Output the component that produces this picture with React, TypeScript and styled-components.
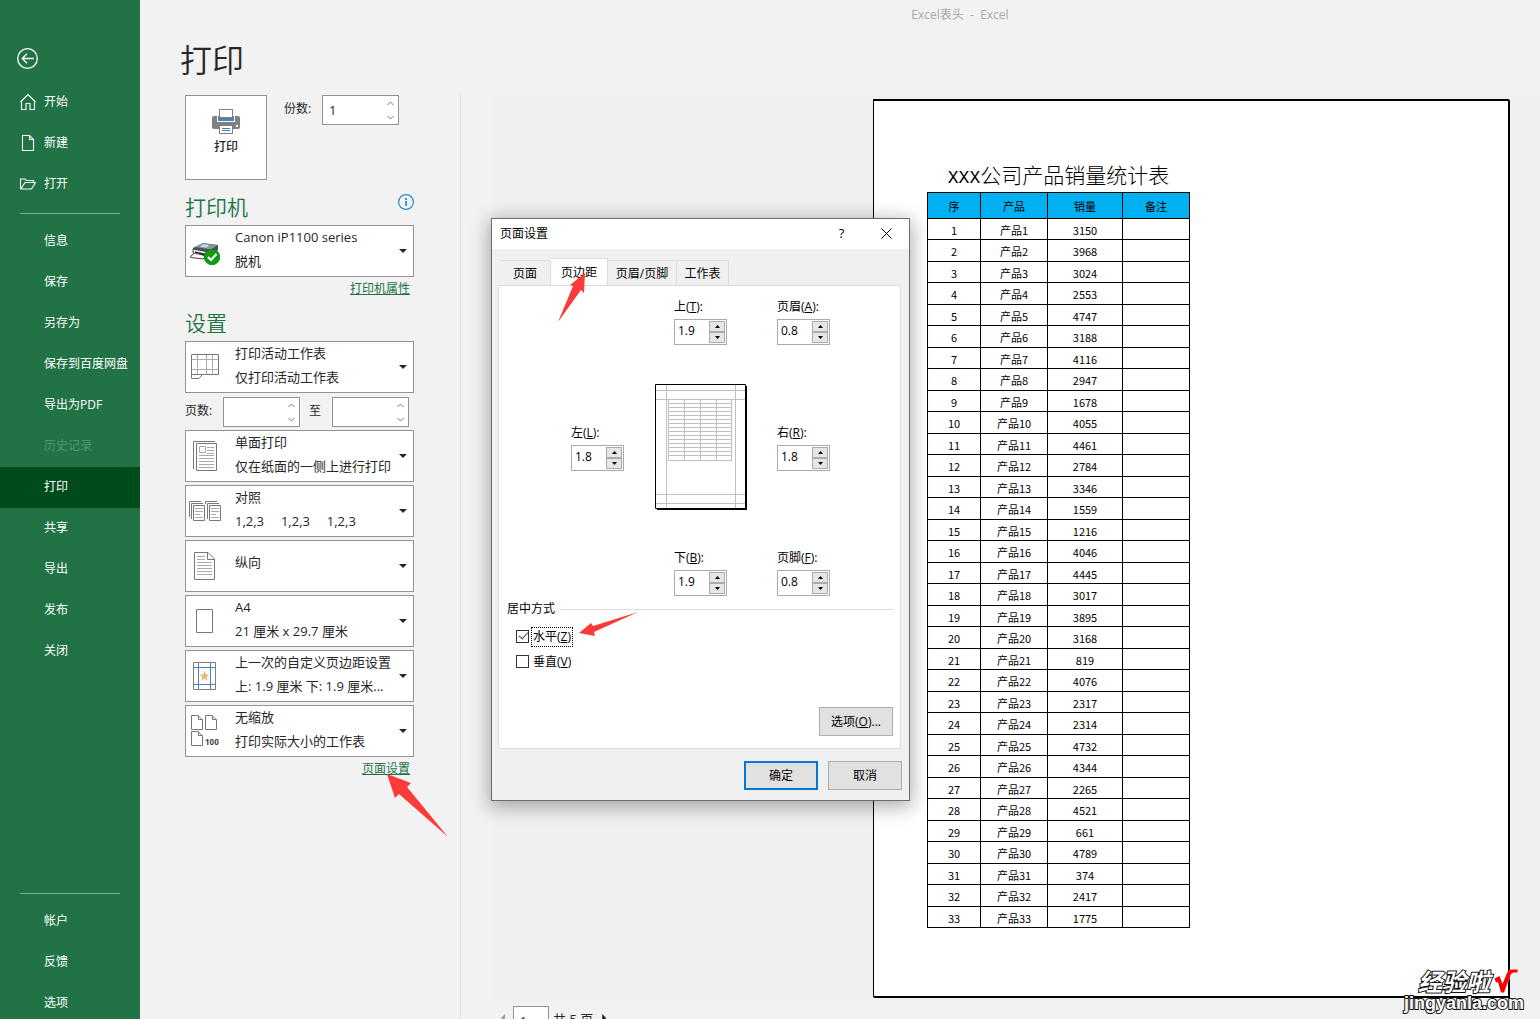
import React from "react";
import styled, { createGlobalStyle, css } from "styled-components";

const GlobalStyle = createGlobalStyle`
  *, *::before, *::after { box-sizing: border-box; }
  body {
    margin: 0;
    background: #f2f2f2;
    color: #262626;
    font-family: "Open Sans", "Noto Sans CJK SC", sans-serif;
    font-size: 12px;
    line-height: 16px;
  }
  button, input, select { font: inherit; color: inherit; margin: 0; border-radius: 0; }
  h1, h2, p, fieldset { margin: 0; padding: 0; border: 0; font-weight: 400; }
`;

/* ---------- shell ---------- */

const Shell = styled.div`
  position: relative;
  display: flex;
  height: 100vh;
  overflow: hidden;
`;

const Sidebar = styled.nav`
  flex: none;
  display: flex;
  flex-direction: column;
  width: 140px;
  padding-top: 48px;
  background: #217346;
  color: #fff;
`;

const BackButton = styled.button`
  display: block;
  width: 22px;
  height: 22px;
  margin: 0 0 11px 17px;
  padding: 0;
  border: 0;
  background: none;
`;

const NavItem = styled.a<{ $active?: boolean; $muted?: boolean; $plain?: boolean }>`
  flex: none;
  display: flex;
  align-items: center;
  gap: 8px;
  height: 41px;
  padding: 0 0 ${(p) => (p.$plain ? 2 : 0)}px 20px;
  color: ${(p) => (p.$muted ? "#569573" : "#fff")};
  background: ${(p) => (p.$active ? "#004b1c" : "transparent")};
  text-decoration: none;
`;

const NavIcon = styled.span`
  display: flex;
  width: 16px;
  height: 18px;
`;

const NavRule = styled.hr`
  flex: none;
  width: 100px;
  height: 1px;
  margin: 9px 20px 7px;
  border: 0;
  background: #6fb38c;
`;

const NavFooter = styled.div`
  display: flex;
  flex-direction: column;
  height: 135px;
  margin-top: auto;
  overflow: hidden;
`;

const Main = styled.main`
  flex: 1;
  display: flex;
  flex-direction: column;
  min-width: 0;
`;

const WindowTitle = styled.div`
  height: 30px;
  padding-left: 240px;
  color: #a8a8a8;
  line-height: 30px;
  text-align: center;
  white-space: pre;
`;

const PageHeading = styled.h1`
  margin: 10px 0 15px 40px;
  font-size: 32px;
  font-weight: 350;
  line-height: 40px;
`;

const Columns = styled.div`
  flex: 1;
  display: flex;
  min-height: 0;
`;

/* ---------- settings column ---------- */

const Settings = styled.section`
  flex: none;
  width: 321px;
  padding: 0 46px 0 45px;
  border-right: 1px solid #dedede;
`;

const PrintRow = styled.div`
  display: flex;
  align-items: flex-start;
`;

const PrintButton = styled.button`
  display: flex;
  flex-direction: column;
  align-items: center;
  gap: 4px;
  width: 82px;
  height: 85px;
  padding: 12px 0 0;
  border: 1px solid #939393;
  background: #fff;
  font-weight: 500;
`;

const FieldLabel = styled.label<{ $width: number; $gap?: number }>`
  width: ${(p) => p.$width}px;
  margin-left: ${(p) => p.$gap ?? 0}px;
  line-height: 27px;
`;

const SpinBox = styled.span`
  display: flex;
  width: 77px;
  height: 30px;
  border: 1px solid #939393;
  background: #fff;
`;

const SpinInput = styled.input`
  flex: 1;
  min-width: 0;
  padding: 0 6px;
  border: 0;
  background: none;
  outline: 0;
  font-size: 13px;
`;

const SpinButtons = styled.span`
  display: flex;
  flex-direction: column;
  width: 16px;
`;

const SpinButton = styled.button`
  flex: 1;
  display: flex;
  align-items: center;
  justify-content: center;
  padding: 0;
  border: 0;
  background: none;
`;

const SectionHead = styled.div`
  display: flex;
  justify-content: space-between;
  margin: 13px 0 4px;
`;

const SectionTitle = styled.h2`
  color: #217346;
  font-size: 21px;
  font-weight: 350;
  line-height: 28px;
`;

const InfoButton = styled.button`
  width: 16px;
  height: 16px;
  margin-top: 1px;
  padding: 0;
  border: 0;
  background: none;
`;

const Stack = styled.div`
  display: flex;
  flex-direction: column;
  gap: 3px;
`;

const Card = styled.label`
  display: flex;
  height: 52px;
  border: 1px solid #939393;
  background: #fff;
  font-size: 13px;
`;

const CardIcon = styled.span`
  flex: none;
  display: flex;
  align-items: center;
  justify-content: center;
  width: 38px;
`;

const CardText = styled.span`
  flex: 1;
  display: flex;
  flex-direction: column;
  min-width: 0;
  margin-top: -1px;
  padding-left: 11px;
  line-height: 24px;
  white-space: pre;
`;

const CardSelect = styled.select<{ $single?: boolean }>`
  appearance: none;
  width: 100%;
  height: ${(p) => (p.$single ? 44 : 24)}px;
  padding: 0;
  border: 0;
  outline: 0;
  background: none;
`;

const Caret = styled.span`
  align-self: center;
  margin: 0 6px 0 -2px;
  border: 4px solid transparent;
  border-top-color: #262626;
  border-bottom-width: 0;
`;

const RangeRow = styled.div`
  display: flex;
  align-items: flex-start;
  height: 31px;
  padding-top: 1px;
`;

const SettingsLink = styled.a`
  align-self: flex-end;
  height: 16px;
  margin-right: 4px;
  color: #217346;
  line-height: 18px;
  text-decoration: underline;
`;

/* ---------- preview ---------- */

const Preview = styled.section`
  flex: 1;
  display: flex;
  flex-direction: column;
  min-width: 0;
  margin-left: 31px;
`;

const Canvas = styled.div`
  flex: 1;
  display: flex;
  justify-content: flex-end;
  min-height: 0;
  padding: 4px 30px 3px 0;
  background: #f0f0f0;
`;

const Paper = styled.article`
  width: 637px;
  padding: 64px 0 0 53px;
  border: solid #000;
  border-width: 2px 2px 2px 1px;
  border-radius: 0 2px 0 2px;
  background: #fff;
  color: #000;
`;

const Sheet = styled.table`
  width: 263px;
  border-spacing: 0;
  border-left: 1px solid #000;
  table-layout: fixed;
  font-family: "Noto Sans CJK SC", sans-serif;
  font-size: 11px;
  line-height: 16px;
  text-align: center;

  caption {
    height: 27px;
    font-size: 21px;
    font-weight: 300;
    line-height: 18px;
    white-space: nowrap;
  }
  th, td {
    height: 21px;
    padding: 2px 0 0;
    border: solid #000;
    border-width: 0 1px 1px 0;
    font-weight: 400;
  }
  tbody tr:nth-child(even) td {
    height: 22px;
    padding-top: 0;
  }
  th {
    height: 27px;
    padding-top: 0;
    border-top-width: 1px;
    background: #00b0f0;
  }
`;

const Latin = styled.span`
  font-family: "Liberation Mono", monospace;
  font-size: 18px;
`;

const Pager = styled.div`
  flex: none;
  display: flex;
  align-items: flex-start;
  height: 18px;
  padding: 5px 0 0 9px;
  overflow: hidden;
`;

const PagerArrow = styled.button<{ $dir: "left" | "right" }>`
  width: 4px;
  height: 24px;
  padding: 0;
  border: 0;
  background: ${(p) => (p.$dir === "left" ? "#999" : "#262626")};
  clip-path: ${(p) =>
    p.$dir === "left"
      ? "polygon(100% 33%, 0 50%, 100% 67%)"
      : "polygon(0 33%, 100% 50%, 0 67%)"};
`;

const PagerInput = styled.input`
  width: 36px;
  height: 30px;
  margin: 0 4px 0 8px;
  padding: 0 6px;
  border: 1px solid #939393;
  background: #fff;
`;

const PagerText = styled.span`
  margin-right: 9px;
  font-size: 13px;
  line-height: 26px;
`;

/* ---------- dialog ---------- */

const Dialog = styled.section`
  position: absolute;
  top: 218px;
  left: 491px;
  display: flex;
  flex-direction: column;
  width: 419px;
  border: 1px solid #6b6b6b;
  background: #f0f0f0;
  box-shadow: 0 4px 18px 2px rgba(0, 0, 0, 0.32);
  color: #000;
`;

const DialogBar = styled.header`
  display: flex;
  align-items: center;
  height: 30px;
  padding-left: 8px;
  background: #fff;
`;

const DialogTitle = styled.h2`
  flex: 1;
  font-size: 12px;
`;

const BarButton = styled.button`
  display: flex;
  align-items: center;
  justify-content: center;
  width: 45px;
  height: 30px;
  padding: 0 0 2px;
  border: 0;
  background: none;
  font-size: 13px;
`;

const Tabs = styled.div`
  display: flex;
  align-items: flex-end;
  height: 37px;
  margin: 0 8px -1px;
`;

const Tab = styled.button<{ $width: number; $active?: boolean }>`
  width: ${(p) => p.$width}px;
  height: 26px;
  padding: 2px 0 0;
  border: 1px solid #dcdcdc;
  border-left-width: 0;
  background: #f0f0f0;
  ${(p) =>
    p.$active &&
    css`
      height: 28px;
      border-bottom-color: #fff;
      background: #fff;
    `}
`;

const Panel = styled.div`
  display: flex;
  flex-direction: column;
  margin: 0 8px 0 6px;
  padding: 11px 6px 12px 8px;
  border: 1px solid #dcdcdc;
  background: #fff;
`;

const Margins = styled.div`
  display: grid;
  grid-template-columns: 53px 91px 53px;
  grid-template-rows: 48px 127px 48px;
  gap: 38px 31px;
  align-items: center;
  justify-items: center;
  margin-left: 64px;
`;

const MarginField = styled.label<{ $column: number }>`
  grid-column: ${(p) => p.$column};
  display: flex;
  flex-direction: column;
  gap: 2px;
  width: 53px;
  line-height: 20px;
  white-space: nowrap;
`;

const MarginBox = styled.span`
  display: flex;
  height: 26px;
  padding: 1px;
  border: 1px solid #ababab;
  background: #fff;
`;

const MarginInput = styled.input`
  flex: 1;
  min-width: 0;
  padding: 0 0 2px 2px;
  border: 0;
  outline: 0;
  background: none;
`;

const MarginButtons = styled.span`
  display: flex;
  flex-direction: column;
  width: 16px;
`;

const MarginButton = styled.button`
  flex: 1;
  display: flex;
  align-items: center;
  justify-content: center;
  padding: 0;
  border: 1px solid #ababab;
  background: #e6e6e6;
`;

const CenterGroup = styled.fieldset`
  min-width: 0;
  margin-top: 5px;
`;

const GroupTitle = styled.legend`
  display: flex;
  align-items: center;
  gap: 5px;
  width: 100%;
  padding: 0;

  &::after {
    content: "";
    flex: 1;
    height: 1px;
    background: #dcdcdc;
  }
`;

const CheckList = styled.div`
  padding: 7px 0 0 9px;
`;

const CheckRow = styled.div`
  display: flex;
  align-items: center;
  gap: 2px;
  height: 25px;
`;

const CheckBox = styled.input`
  appearance: none;
  width: 13px;
  height: 13px;
  border: 1px solid #333;
  background: #fff;

  &:checked::after {
    content: "";
    display: block;
    width: 5px;
    height: 9px;
    margin: -1px 0 0 4px;
    border: solid #444;
    border-width: 0 1px 1px 0;
    transform: rotate(42deg);
  }
`;

const CheckLabel = styled.label<{ $focused?: boolean }>`
  padding: 1px;
  border: 1px ${(p) => (p.$focused ? "dotted #000" : "solid transparent")};
`;

const PushButton = styled.button<{ $primary?: boolean }>`
  width: 74px;
  height: 29px;
  padding: 0;
  border: ${(p) => (p.$primary ? "2px solid #0078d7" : "1px solid #adadad")};
  background: #e1e1e1;
`;

const PanelActions = styled.div`
  display: flex;
  justify-content: flex-end;
  margin: 33px 1px 0 0;
`;

const DialogActions = styled.footer`
  display: flex;
  justify-content: flex-end;
  gap: 10px;
  padding: 12px 7px 10px;
`;

/* ---------- overlays ---------- */

const Arrow = styled.svg<{ $x: number; $y: number }>`
  position: absolute;
  left: ${(p) => p.$x}px;
  top: ${(p) => p.$y}px;
  fill: #fc3a3a;
  pointer-events: none;
`;

const Watermark = styled.div`
  position: absolute;
  right: 16px;
  bottom: 7px;
  display: flex;
  flex-direction: column;
  align-items: flex-end;
  color: #fff;
  font-weight: 700;
  -webkit-text-stroke: 2px #111;
  paint-order: stroke fill;
`;

const MarkTop = styled.div`
  display: flex;
  align-items: center;
  gap: 4px;
  margin-right: 6px;
  font-size: 24px;
  font-style: italic;
  line-height: 24px;
`;

const MarkUrl = styled.div`
  font-family: "Liberation Sans", Arial, sans-serif;
  font-size: 18px;
  line-height: 18px;
`;

/* ---------- icons ---------- */

const BackIcon = () => (
  <svg width="22" height="22" viewBox="0 0 22 22" fill="none" stroke="#fff" strokeWidth="1.3">
    <circle cx="10.5" cy="10.5" r="9.8" />
    <path d="M17 10.5H5.5M10 5.8 5.3 10.5 10 15.2" />
  </svg>
);

const HomeIcon = () => (
  <svg width="16" height="18" viewBox="0 0 16 18" fill="none" stroke="#fff" strokeWidth="1.1">
    <path d="M.5 9 8 1.6 15.500 9M1.500 8.200V16.500H6V10.500H10V16.500H14.500V8.200" />
  </svg>
);

const NewIcon = () => (
  <svg width="16" height="18" viewBox="0 0 16 18" fill="none" stroke="#fff" strokeWidth="1.1">
    <path d="M2.500 1.500H9.500L13.500 5.500V16.500H2.500ZM9.500 1.500V5.500H13.500" />
  </svg>
);

const OpenIcon = () => (
  <svg width="16" height="18" viewBox="0 0 16 18" fill="none" stroke="#fff" strokeWidth="1.1">
    <path d="M.5 14V4H5L6.500 5.500H13.500V7.500M.5 14H11.500L15.500 7.500H5L.8 14" />
  </svg>
);

const PrinterIcon = () => (
  <svg width="28" height="27" viewBox="0 0 28 27">
    <rect x="0" y="8" width="28" height="13" rx="2" fill="#808080" />
    <rect x="5" y="8" width="18" height="6" fill="#fff" />
    <rect x="6" y="8" width="16" height="5" fill="#4a81bd" />
    <rect x="7.500" y="1.500" width="13" height="8" fill="#fff" stroke="#808080" />
    <rect x="24" y="17" width="2" height="2" fill="#fff" />
    <rect x="7.500" y="17.500" width="13" height="8" fill="#fff" stroke="#808080" />
    <path d="M10 20.500h8M10 22.500h8" stroke="#4a81bd" />
  </svg>
);

const InfoIcon = () => (
  <svg width="16" height="16" viewBox="0 0 16 16" fill="none" stroke="#2490d0">
    <circle cx="8" cy="8" r="7.400" strokeWidth="1.200" />
    <path d="M8 7v5M8 4v2" strokeWidth="1.800" />
  </svg>
);

const DeviceIcon = () => (
  <svg width="30" height="30" viewBox="0 0 30 30">
    <path d="M3 12 13 7 28 9V14L21 20 3 16Z" fill="#4b5057" />
    <path d="M5 11 12.500 7 27 9.500 21 13.500Z" fill="#8c949e" />
    <path d="M10 10.500 13 8.300 19 9 16.500 11.800Z" fill="#b9dcfb" />
    <path d="M3 13 19 16V21L3 17Z" fill="#e8e8e8" stroke="#444" />
    <path d="M5 15.500 17 18V20L5 17Z" fill="#222" />
    <path d="M.8 20 5 17 16 20 13 23 .8 21.500Z" fill="#fafafa" stroke="#444" />
    <circle cx="22" cy="21" r="7.800" fill="#0f9d0f" stroke="#087a08" strokeWidth=".7" />
    <path d="M18 21 21 24 26.500 18" fill="none" stroke="#fff" strokeWidth="2.200" />
  </svg>
);

const SheetIcon = () => (
  <svg width="28" height="26" viewBox="0 0 28 26" fill="none">
    <path d="M1 5.500H27M1 15.500H27M6.500 1V20M15.500 1V20M21.500 1V20" stroke="#ababab" />
    <path d="M.5 20.500V.5H27.500V20.500H11.500L8 24.500H.5V20.500H11.500" stroke="#777" />
  </svg>
);

const OneSideIcon = () => (
  <svg width="24" height="30" viewBox="0 0 24 30" fill="none" stroke="#777">
    <path d="M.5 28V.5H22M3.500 2.500H23.500V29.500H3.500Z" />
    <path d="M6.500 5.500H12.500V11.500H6.500ZM14 6.500H21M14 9.500H21M14 12.500H21M6 14.500H21M6 17.500H21M6 20.500H21M6 23.500H21M6 26.500H21" stroke="#ababab" />
  </svg>
);

const CollateIcon = () => (
  <svg width="32" height="20" viewBox="0 0 32 20" fill="none" stroke="#777">
    <path d="M.5 16V.5H12M2.500 18V2.500H14M4.500 4.500H15.500V19.500H4.500ZM16.500 3V.5H28M18.500 18V2.500H30M20.500 4.500H31.500V19.500H20.500Z" />
    <path d="M6 7.500H14M6 10.500H14M6 13.500H11M6 16.500H14M22 7.500H30M22 10.500H30M22 13.500H27M22 16.500H30" stroke="#ababab" />
  </svg>
);

const PortraitIcon = () => (
  <svg width="22" height="28" viewBox="0 0 22 28" fill="none" stroke="#777">
    <path d="M.5 .5H14L20.500 7V27.500H.5ZM13.500 .5V7.500H20.500" />
    <path d="M3 4.500H11M3 7.500H11M3 10.500H18M3 13.500H18M3 16.500H18M3 19.500H18M3 22.500H18" stroke="#ababab" />
  </svg>
);

const PaperIcon = () => (
  <svg width="18" height="24" viewBox="0 0 18 24" fill="none" stroke="#777">
    <path d="M.5 .5H16.500V23.500H.5Z" />
  </svg>
);

const CustomMarginIcon = () => (
  <svg width="24" height="28" viewBox="0 0 24 28" fill="none">
    <path d="M.5 .5H22.500V27.500H.5Z" stroke="#808080" />
    <path d="M5.500 1V27M17.500 1V27M1 5.500H22M1 22.500H22" stroke="#4a81bd" />
    <path d="M11.500 8.500 12.900 12.600H16.500L13.700 14.900 14.800 18.800 11.500 16.500 8.200 18.800 9.300 14.900 6.500 12.600H10.100Z" fill="#e9bb74" />
  </svg>
);

const ScaleIcon = () => (
  <svg width="30" height="32" viewBox="0 0 30 32" fill="none" stroke="#777">
    <path d="M1.500 .5H8L12.500 5V14.500H1.500ZM8.500 .5V4.500H12.500M15.500 .5H22L26.500 5V14.500H15.500ZM22.500 .5V4.500H26.500M1.500 16.500H8L12.500 21V30.500H1.500ZM8.500 16.500V20.500H12.500" />
    <text x="15" y="30" fill="#444" stroke="none" fontSize="8" fontWeight="700" fontFamily="Open Sans, sans-serif">
      100
    </text>
  </svg>
);

const Chevron = ({ up }: { up?: boolean }) => (
  <svg width="7" height="5" viewBox="0 0 7 5" fill="none" stroke="#777">
    <path d={up ? "M.5 4 3.500 1 6.500 4" : "M.5 1 3.500 4 6.500 1"} />
  </svg>
);

const Triangle = ({ up }: { up?: boolean }) => (
  <svg width="5" height="3" viewBox="0 0 5 3">
    <path d={up ? "M0 3 2.500 0 5 3Z" : "M0 0 2.500 3 5 0Z"} />
  </svg>
);

const CloseIcon = () => (
  <svg width="11" height="11" viewBox="0 0 11 11" fill="none" stroke="#000">
    <path d="M.5 .5 10.500 10.500M10.500 .5 .5 10.500" />
  </svg>
);

const MiniPage = () => (
  <svg width="92" height="126" viewBox="0 0 92 126" fill="none">
    <path d="M2 2H92V126H2Z" fill="#000" />
    <path d="M.5 .5H90.500V124.500H.5Z" fill="#fff" stroke="#000" />
    <path
      stroke="#c0c0c0"
      d={
        "M11.500 1V124M80.500 1V124M1 6.500H90M1 15.500H90M1 110.500H90M1 119.500H90" +
        "M13.500 16V77M29.500 16V77M45.500 16V77M61.500 16V77M76.500 16V77" +
        Array.from({ length: 14 }, (_, i) => `M13 ${19.5 + i * 4}H77`).join("") +
        "M13 76.500H77"
      }
    />
  </svg>
);

const TickMark = () => (
  <svg width="24" height="25" viewBox="0 0 24 25">
    <path d="M.5 9.500 5.500 7 8.500 15 13 4Q14.500 .5 18 .5H23.500V3.500H19.500Q17.500 3.500 16.500 6L10 23.500H7L4 13 2 13.500Z" fill="#f00" stroke="#fff" strokeWidth=".6" />
  </svg>
);

/* ---------- parts ---------- */

function Spin({ id, value }: { id: string; value: string }) {
  return (
    <SpinBox>
      <SpinInput id={id} defaultValue={value} />
      <SpinButtons>
        <SpinButton type="button" aria-label="增加"><Chevron up /></SpinButton>
        <SpinButton type="button" aria-label="减少"><Chevron /></SpinButton>
      </SpinButtons>
    </SpinBox>
  );
}

interface OptionProps {
  icon: React.ReactNode;
  title: string;
  detail?: string;
}

function OptionCard({ icon, title, detail }: OptionProps) {
  return (
    <Card>
      <CardIcon>{icon}</CardIcon>
      <CardText>
        <CardSelect $single={!detail}>
          <option>{title}</option>
        </CardSelect>
        {detail}
      </CardText>
      <Caret />
    </Card>
  );
}

interface MarginProps {
  name: string;
  hotkey: string;
  value: string;
  column: number;
}

function Margin({ name, hotkey, value, column }: MarginProps) {
  return (
    <MarginField $column={column}>
      <span>{name}(<u>{hotkey}</u>):</span>
      <MarginBox>
        <MarginInput defaultValue={value} />
        <MarginButtons>
          <MarginButton type="button" aria-label="增加"><Triangle up /></MarginButton>
          <MarginButton type="button" aria-label="减少"><Triangle /></MarginButton>
        </MarginButtons>
      </MarginBox>
    </MarginField>
  );
}

const topNav = [
  { name: "开始", icon: <HomeIcon /> },
  { name: "新建", icon: <NewIcon /> },
  { name: "打开", icon: <OpenIcon /> },
];
const midNav = ["信息", "保存", "另存为", "保存到百度网盘", "导出为PDF", "历史记录", "打印", "共享", "导出", "发布", "关闭"];
const endNav = ["帐户", "反馈", "选项"];

const sales = [
  3150, 3968, 3024, 2553, 4747, 3188, 4116, 2947, 1678, 4055, 4461, 2784, 3346, 1559, 1216, 4046, 4445,
  3017, 3895, 3168, 819, 4076, 2317, 2314, 4732, 4344, 2265, 4521, 661, 4789, 374, 2417, 1775,
];

const pageOptions: OptionProps[] = [
  { icon: <OneSideIcon />, title: "单面打印", detail: "仅在纸面的一侧上进行打印" },
  { icon: <CollateIcon />, title: "对照", detail: "1,2,3     1,2,3     1,2,3" },
  { icon: <PortraitIcon />, title: "纵向" },
  { icon: <PaperIcon />, title: "A4", detail: "21 厘米 x 29.7 厘米" },
  { icon: <CustomMarginIcon />, title: "上一次的自定义页边距设置", detail: "上: 1.9 厘米 下: 1.9 厘米..." },
  { icon: <ScaleIcon />, title: "无缩放", detail: "打印实际大小的工作表" },
];

export default function App() {
  return (
    <Shell>
      <GlobalStyle />
      <Sidebar>
        <BackButton type="button" aria-label="返回"><BackIcon /></BackButton>
        {topNav.map((item) => (
          <NavItem key={item.name} href="#">
            <NavIcon>{item.icon}</NavIcon>
            {item.name}
          </NavItem>
        ))}
        <NavRule />
        {midNav.map((name) => (
          <NavItem key={name} href="#" $plain $active={name === "打印"} $muted={name === "历史记录"}>
            <NavIcon />
            {name}
          </NavItem>
        ))}
        <NavFooter>
          <NavRule />
          {endNav.map((name) => (
            <NavItem key={name} href="#" $plain>
              <NavIcon />
              {name}
            </NavItem>
          ))}
        </NavFooter>
      </Sidebar>

      <Main>
        <WindowTitle>{"Excel表头  -  Excel"}</WindowTitle>
        <PageHeading>打印</PageHeading>
        <Columns>
          <Settings>
            <PrintRow>
              <PrintButton type="button"><PrinterIcon />打印</PrintButton>
              <FieldLabel htmlFor="copies" $width={38} $gap={17}>份数:</FieldLabel>
              <Spin id="copies" value="1" />
            </PrintRow>
            <SectionHead>
              <SectionTitle>打印机</SectionTitle>
              <InfoButton type="button" aria-label="打印机信息"><InfoIcon /></InfoButton>
            </SectionHead>
            <Stack>
              <OptionCard icon={<DeviceIcon />} title="Canon iP1100 series" detail="脱机" />
              <SettingsLink href="#">打印机属性</SettingsLink>
            </Stack>
            <SectionHead>
              <SectionTitle>设置</SectionTitle>
            </SectionHead>
            <Stack>
              <OptionCard icon={<SheetIcon />} title="打印活动工作表" detail="仅打印活动工作表" />
              <RangeRow>
                <FieldLabel htmlFor="from" $width={38}>页数:</FieldLabel>
                <Spin id="from" value="" />
                <FieldLabel htmlFor="to" $width={23} $gap={9}>至</FieldLabel>
                <Spin id="to" value="" />
              </RangeRow>
              {pageOptions.map((option) => (
                <OptionCard key={option.title} {...option} />
              ))}
              <SettingsLink href="#">页面设置</SettingsLink>
            </Stack>
          </Settings>

          <Preview>
            <Canvas>
              <Paper>
                <Sheet>
                  <caption><Latin>XXX</Latin>公司产品销量统计表</caption>
                  <colgroup>
                    <col width="53" />
                    <col width="67" />
                    <col width="75" />
                    <col width="67" />
                  </colgroup>
                  <thead>
                    <tr><th>序</th><th>产品</th><th>销量</th><th>备注</th></tr>
                  </thead>
                  <tbody>
                    {sales.map((amount, i) => (
                      <tr key={i}>
                        <td>{i + 1}</td>
                        <td>{`产品${i + 1}`}</td>
                        <td>{amount}</td>
                        <td />
                      </tr>
                    ))}
                  </tbody>
                </Sheet>
              </Paper>
            </Canvas>
            <Pager>
              <PagerArrow type="button" $dir="left" aria-label="上一页" />
              <PagerInput aria-label="当前页" defaultValue="1" />
              <PagerText>共 5 页</PagerText>
              <PagerArrow type="button" $dir="right" aria-label="下一页" />
            </Pager>
          </Preview>
        </Columns>
      </Main>

      <Dialog role="dialog" aria-labelledby="dialog-title">
        <DialogBar>
          <DialogTitle id="dialog-title">页面设置</DialogTitle>
          <BarButton type="button">?</BarButton>
          <BarButton type="button" aria-label="关闭"><CloseIcon /></BarButton>
        </DialogBar>
        <Tabs role="tablist">
          <Tab type="button" role="tab" $width={51}>页面</Tab>
          <Tab type="button" role="tab" $width={57} $active>页边距</Tab>
          <Tab type="button" role="tab" $width={69}>页眉/页脚</Tab>
          <Tab type="button" role="tab" $width={52}>工作表</Tab>
        </Tabs>
        <Panel>
          <Margins>
            <Margin name="上" hotkey="T" value="1.9" column={2} />
            <Margin name="页眉" hotkey="A" value="0.8" column={3} />
            <Margin name="左" hotkey="L" value="1.8" column={1} />
            <MiniPage />
            <Margin name="右" hotkey="R" value="1.8" column={3} />
            <Margin name="下" hotkey="B" value="1.9" column={2} />
            <Margin name="页脚" hotkey="F" value="0.8" column={3} />
          </Margins>
          <CenterGroup>
            <GroupTitle>居中方式</GroupTitle>
            <CheckList>
              <CheckRow>
                <CheckBox type="checkbox" id="horizontal" defaultChecked />
                <CheckLabel htmlFor="horizontal" $focused>水平(<u>Z</u>)</CheckLabel>
              </CheckRow>
              <CheckRow>
                <CheckBox type="checkbox" id="vertical" />
                <CheckLabel htmlFor="vertical">垂直(<u>V</u>)</CheckLabel>
              </CheckRow>
            </CheckList>
          </CenterGroup>
          <PanelActions>
            <PushButton type="button">选项(<u>O</u>)...</PushButton>
          </PanelActions>
        </Panel>
        <DialogActions>
          <PushButton type="button" $primary>确定</PushButton>
          <PushButton type="button">取消</PushButton>
        </DialogActions>
      </Dialog>

      <Arrow $x={557} $y={272} width="31" height="51" viewBox="0 0 31 51">
        <path d="M28 1 13 13 16 14 1 50 24 18 27 21Z" />
      </Arrow>
      <Arrow $x={579} $y={611} width="60" height="27" viewBox="0 0 60 27">
        <path d="M0 22 12 12 14 15 59 1 15 21 16 25Z" />
      </Arrow>
      <Arrow $x={387} $y={774} width="62" height="64" viewBox="0 0 62 64">
        <path d="M0 0 24 9 20 13 61 63 12 20 8 24Z" />
      </Arrow>

      <Watermark>
        <MarkTop>经验啦<TickMark /></MarkTop>
        <MarkUrl>jingyanla.com</MarkUrl>
      </Watermark>
    </Shell>
  );
}
